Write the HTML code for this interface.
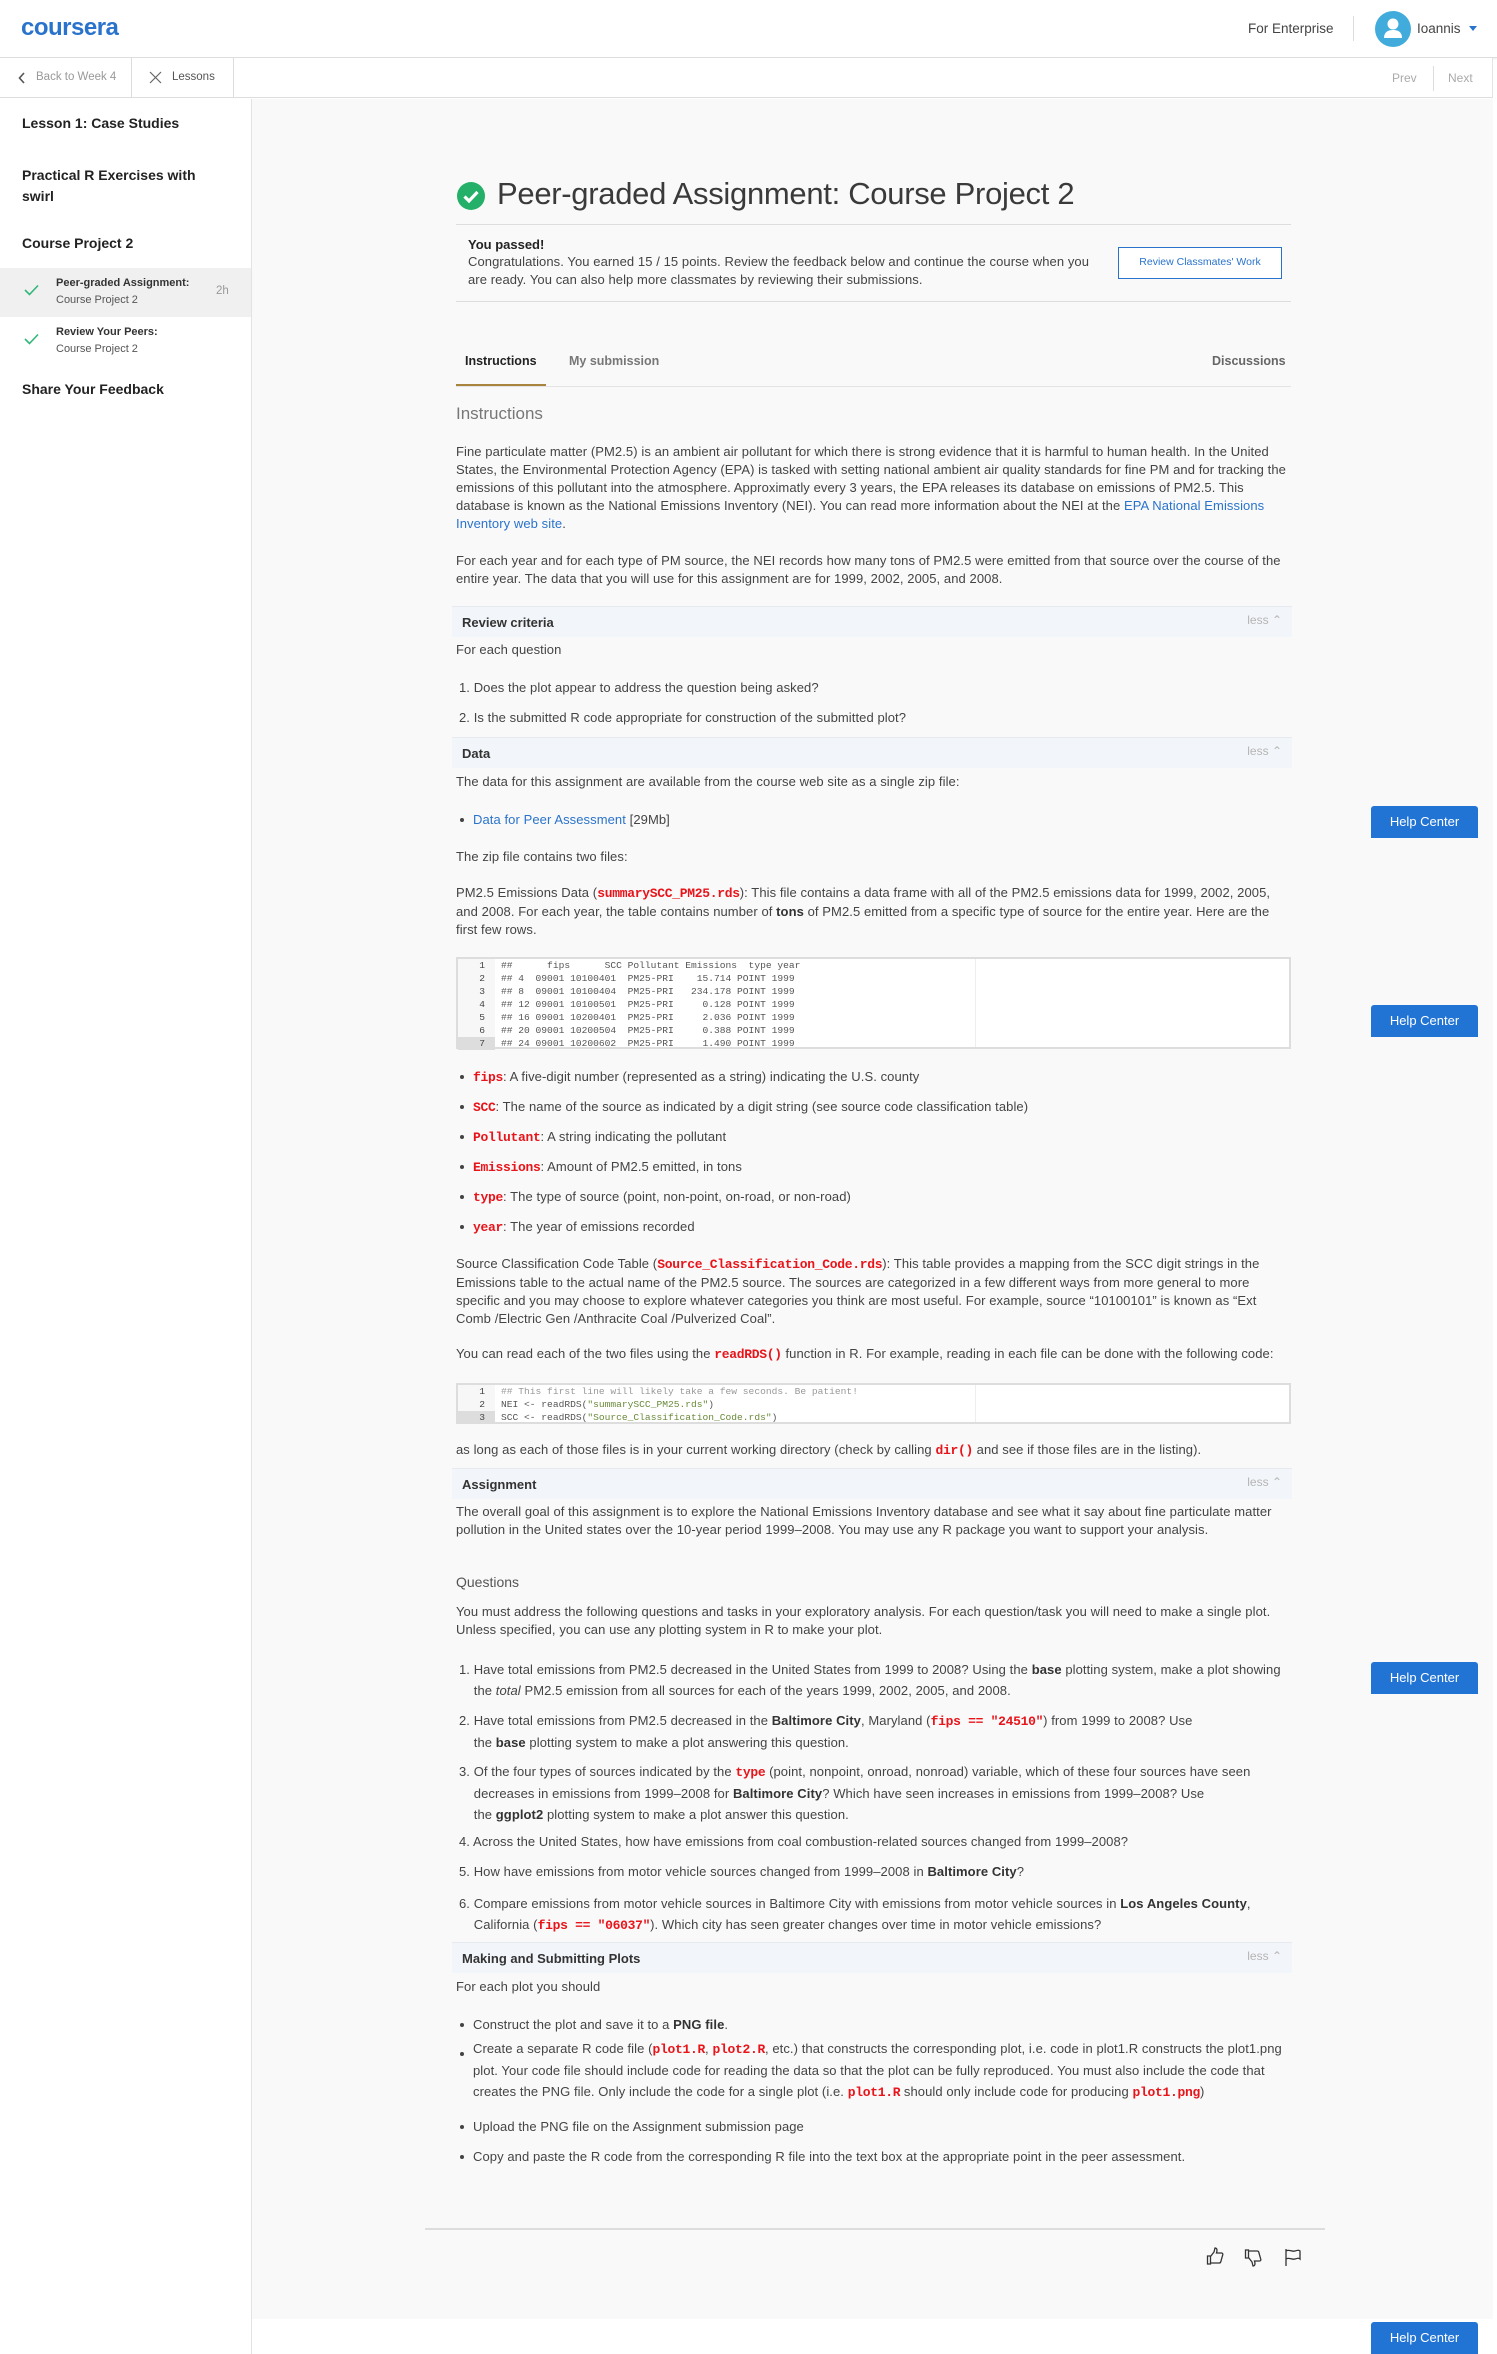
<!DOCTYPE html>
<html><head><meta charset="utf-8">
<style>
*{margin:0;padding:0;box-sizing:border-box}
body{width:1497px;height:2354px;position:relative;background:#fff;font-family:"Liberation Sans",sans-serif;color:#444;overflow:hidden}
.a{position:absolute;white-space:nowrap}
.t{position:absolute;white-space:nowrap;font-size:13px;letter-spacing:0.08px;line-height:18px;color:#444;left:456px}
.r{font-family:"Liberation Mono",monospace;font-weight:bold;color:#e8141a;font-size:13px;letter-spacing:-0.3px}
b{color:#333}
a{color:#2a73cc;text-decoration:none}
.sh{position:absolute;left:452px;width:840px;height:31px;background:#f2f5f9;border-top:1px solid #e6eaef}
.sh span{position:absolute;left:10px;top:8px;font-size:13px;font-weight:bold;color:#333}
.sh i{position:absolute;right:10px;top:6px;font-style:normal;font-size:12px;color:#b5b5b5}
.code{position:absolute;left:456px;width:835px;border:2px solid #ddd;background:#fff;font-family:"Liberation Mono",monospace;font-size:9.6px;line-height:13px;color:#555}
.code .g{position:absolute;left:0;top:0;bottom:0;width:37px;background:#f7f7f7;text-align:right;padding-right:10px;color:#444}
.code .c{position:absolute;left:43px;top:0;white-space:pre}
.bul{position:absolute;left:460px;width:4px;height:4px;border-radius:50%;background:#444}
.hc{position:absolute;left:1371px;width:107px;height:32px;background:#2174d4;color:#fff;font-size:13px;text-align:center;line-height:32px;border-radius:3px 3px 0 0}
</style></head><body>

<!-- header -->
<div class="a" style="left:0;top:0;width:1497px;height:58px;background:#fff;border-bottom:1px solid #ddd;box-shadow:0 1px 2px rgba(0,0,0,.08)"></div>
<div class="a" style="left:21px;top:14px;font-size:24px;font-weight:bold;color:#2a73cc;letter-spacing:-0.5px">coursera</div>
<div class="a" style="left:1248px;top:21px;font-size:13.5px;color:#444">For Enterprise</div>
<div class="a" style="left:1353px;top:16px;width:1px;height:25px;background:#ddd"></div>
<svg class="a" style="left:1375px;top:11px" width="36" height="36" viewBox="0 0 36 36"><circle cx="18" cy="18" r="18" fill="#41acdc"/><circle cx="18" cy="13" r="5.5" fill="#fff"/><path d="M9 27c0-6 4-8 9-8s9 2 9 8z" fill="#fff"/></svg>
<div class="a" style="left:1417px;top:21px;font-size:13.5px;color:#444">Ioannis</div>
<div class="a" style="left:1469px;top:26px;width:0;height:0;border-left:4px solid transparent;border-right:4px solid transparent;border-top:5px solid #2a73cc"></div>

<!-- nav bar -->
<div class="a" style="left:0;top:58px;width:1493px;height:40px;background:#fff;border-bottom:1px solid #ddd;border-right:1px solid #e5e5e5"></div>
<svg class="a" style="left:18px;top:72px" width="8" height="12"><path d="M6 1L1.5 6 6 11" stroke="#555" stroke-width="1.6" fill="none"/></svg>
<div class="a" style="left:36px;top:71px;font-size:11.5px;color:#999">Back to Week 4</div>
<div class="a" style="left:131px;top:58px;width:1px;height:40px;background:#ddd"></div>
<svg class="a" style="left:149px;top:71px" width="13" height="13"><path d="M1 1L12 12M12 1L1 12" stroke="#666" stroke-width="1.2"/></svg>
<div class="a" style="left:172px;top:71px;font-size:11.5px;color:#555">Lessons</div>
<div class="a" style="left:233px;top:58px;width:1px;height:40px;background:#ddd"></div>
<div class="a" style="left:1392px;top:71px;font-size:12px;color:#aaa">Prev</div>
<div class="a" style="left:1433px;top:66px;width:1px;height:25px;background:#ddd"></div>
<div class="a" style="left:1448px;top:71px;font-size:12px;color:#aaa">Next</div>

<!-- sidebar -->
<div class="a" style="left:0;top:99px;width:252px;height:2255px;background:#fff;border-right:1px solid #e3e3e3"></div>
<div class="a" style="left:22px;top:115px;font-size:14px;font-weight:bold;color:#222">Lesson 1: Case Studies</div>
<div class="a" style="left:22px;top:165px;font-size:14px;font-weight:bold;color:#222;line-height:21px">Practical R Exercises with<br>swirl</div>
<div class="a" style="left:22px;top:235px;font-size:14px;font-weight:bold;color:#222">Course Project 2</div>
<div class="a" style="left:0;top:268px;width:251px;height:49px;background:#f0f0f0"></div>
<svg class="a" style="left:24px;top:284px" width="15" height="12"><path d="M1 6l4.5 4.5L14 1.5" stroke="#2fb879" stroke-width="1.6" fill="none"/></svg>
<div class="a" style="left:56px;top:277px;font-size:11px;font-weight:bold;color:#333">Peer-graded Assignment:</div>
<div class="a" style="left:56px;top:294px;font-size:11px;color:#555">Course Project 2</div>
<div class="a" style="left:216px;top:285px;font-size:11.5px;color:#999">2h</div>
<svg class="a" style="left:24px;top:333px" width="15" height="12"><path d="M1 6l4.5 4.5L14 1.5" stroke="#2fb879" stroke-width="1.6" fill="none"/></svg>
<div class="a" style="left:56px;top:326px;font-size:11px;font-weight:bold;color:#333">Review Your Peers:</div>
<div class="a" style="left:56px;top:343px;font-size:11px;color:#555">Course Project 2</div>
<div class="a" style="left:22px;top:381px;font-size:14px;font-weight:bold;color:#222">Share Your Feedback</div>

<!-- main bg -->
<div class="a" style="left:252px;top:99px;width:1241px;height:2220px;background:#f9f9f9"></div>

<!-- title -->
<svg class="a" style="left:457px;top:182px" width="28" height="28" viewBox="0 0 28 28"><circle cx="14" cy="14" r="14" fill="#24b068"/><path d="M7.5 14.5l4.5 4.5 8.5-9" stroke="#fff" stroke-width="3.2" fill="none"/></svg>
<div class="a" style="left:497px;top:176px;font-size:31px;color:#3a3a3a;letter-spacing:-0.3px">Peer-graded Assignment: Course Project 2</div>
<div class="a" style="left:456px;top:224px;width:835px;height:1px;background:#ddd"></div>
<div class="a" style="left:468px;top:237px;font-size:13px;font-weight:bold;color:#222">You passed!</div>
<div class="t" style="left:468px;top:253px">Congratulations. You earned 15 / 15 points. Review the feedback below and continue the course when you<br>are ready. You can also help more classmates by reviewing their submissions.</div>
<div class="a" style="left:1118px;top:247px;width:164px;height:32px;border:1.5px solid #2a73cc;background:#fff;color:#2a73cc;font-size:10.5px;text-align:center;line-height:29px">Review Classmates' Work</div>
<div class="a" style="left:456px;top:301px;width:835px;height:1px;background:#ddd"></div>

<!-- tabs -->
<div class="a" style="left:465px;top:354px;font-size:12.5px;font-weight:bold;color:#222">Instructions</div>
<div class="a" style="left:569px;top:354px;font-size:12.5px;font-weight:bold;color:#777">My submission</div>
<div class="a" style="left:1212px;top:354px;font-size:12.5px;font-weight:bold;color:#666">Discussions</div>
<div class="a" style="left:456px;top:386px;width:835px;height:1px;background:#e3e3e3"></div>
<div class="a" style="left:456px;top:384px;width:90px;height:2px;background:#a8843f"></div>

<div class="a" style="left:456px;top:404px;font-size:17px;color:#777">Instructions</div>
<div class="t" style="top:443px">Fine particulate matter (PM2.5) is an ambient air pollutant for which there is strong evidence that it is harmful to human health. In the United<br>States, the Environmental Protection Agency (EPA) is tasked with setting national ambient air quality standards for fine PM and for tracking the<br>emissions of this pollutant into the atmosphere. Approximatly every 3 years, the EPA releases its database on emissions of PM2.5. This<br>database is known as the National Emissions Inventory (NEI). You can read more information about the NEI at the <a>EPA National Emissions</a><br><a>Inventory web site</a>.</div>
<div class="t" style="top:552px">For each year and for each type of PM source, the NEI records how many tons of PM2.5 were emitted from that source over the course of the<br>entire year. The data that you will use for this assignment are for 1999, 2002, 2005, and 2008.</div>

<!-- review criteria -->
<div class="sh" style="top:606px"><span>Review criteria</span><i>less ⌃</i></div>
<div class="t" style="top:641px">For each question</div>
<div class="t" style="top:679px;left:459px">1. Does the plot appear to address the question being asked?</div>
<div class="t" style="top:709px;left:459px">2. Is the submitted R code appropriate for construction of the submitted plot?</div>

<!-- data -->
<div class="sh" style="top:737px"><span>Data</span><i>less ⌃</i></div>
<div class="t" style="top:773px">The data for this assignment are available from the course web site as a single zip file:</div>
<div class="bul" style="top:818px"></div>
<div class="t" style="top:811px;left:473px"><a>Data for Peer Assessment</a> [29Mb]</div>
<div class="t" style="top:848px">The zip file contains two files:</div>
<div class="t" style="top:884px">PM2.5 Emissions Data (<span class="r">summarySCC_PM25.rds</span>): This file contains a data frame with all of the PM2.5 emissions data for 1999, 2002, 2005,<br>and 2008. For each year, the table contains number of <b>tons</b> of PM2.5 emitted from a specific type of source for the entire year. Here are the<br>first few rows.</div>

<div class="code" style="top:957px;height:92px"><div class="g">1<br>2<br>3<br>4<br>5<br>6<br><span style="display:block;background:#ddd;margin-right:-10px;padding-right:10px">7</span></div><div style="position:absolute;left:517px;top:0;bottom:0;width:1px;background:#eee"></div><div class="c">##      fips      SCC Pollutant Emissions  type year
## 4  09001 10100401  PM25-PRI    15.714 POINT 1999
## 8  09001 10100404  PM25-PRI   234.178 POINT 1999
## 12 09001 10100501  PM25-PRI     0.128 POINT 1999
## 16 09001 10200401  PM25-PRI     2.036 POINT 1999
## 20 09001 10200504  PM25-PRI     0.388 POINT 1999
## 24 09001 10200602  PM25-PRI     1.490 POINT 1999</div></div>

<div class="bul" style="top:1075px"></div><div class="t" style="top:1068px;left:473px"><span class="r">fips</span>: A five-digit number (represented as a string) indicating the U.S. county</div>
<div class="bul" style="top:1105px"></div><div class="t" style="top:1098px;left:473px"><span class="r">SCC</span>: The name of the source as indicated by a digit string (see source code classification table)</div>
<div class="bul" style="top:1135px"></div><div class="t" style="top:1128px;left:473px"><span class="r">Pollutant</span>: A string indicating the pollutant</div>
<div class="bul" style="top:1165px"></div><div class="t" style="top:1158px;left:473px"><span class="r">Emissions</span>: Amount of PM2.5 emitted, in tons</div>
<div class="bul" style="top:1195px"></div><div class="t" style="top:1188px;left:473px"><span class="r">type</span>: The type of source (point, non-point, on-road, or non-road)</div>
<div class="bul" style="top:1225px"></div><div class="t" style="top:1218px;left:473px"><span class="r">year</span>: The year of emissions recorded</div>

<div class="t" style="top:1255px">Source Classification Code Table (<span class="r">Source_Classification_Code.rds</span>): This table provides a mapping from the SCC digit strings in the<br>Emissions table to the actual name of the PM2.5 source. The sources are categorized in a few different ways from more general to more<br>specific and you may choose to explore whatever categories you think are most useful. For example, source “10100101” is known as “Ext<br>Comb /Electric Gen /Anthracite Coal /Pulverized Coal”.</div>
<div class="t" style="top:1345px">You can read each of the two files using the <span class="r">readRDS()</span> function in R. For example, reading in each file can be done with the following code:</div>

<div class="code" style="top:1383px;height:41px"><div class="g">1<br>2<br><span style="display:block;background:#ddd;margin-right:-10px;padding-right:10px">3</span></div><div style="position:absolute;left:517px;top:0;bottom:0;width:1px;background:#eee"></div><div class="c"><span style="color:#999">## This first line will likely take a few seconds. Be patient!</span>
NEI &lt;- readRDS(<span style="color:#6a8a3a">"summarySCC_PM25.rds"</span>)
SCC &lt;- readRDS(<span style="color:#6a8a3a">"Source_Classification_Code.rds"</span>)</div></div>

<div class="t" style="top:1441px">as long as each of those files is in your current working directory (check by calling <span class="r">dir()</span> and see if those files are in the listing).</div>

<!-- assignment -->
<div class="sh" style="top:1468px"><span>Assignment</span><i>less ⌃</i></div>
<div class="t" style="top:1503px">The overall goal of this assignment is to explore the National Emissions Inventory database and see what it say about fine particulate matter<br>pollution in the United states over the 10-year period 1999–2008. You may use any R package you want to support your analysis.</div>

<div class="a" style="left:456px;top:1574px;font-size:14px;color:#555">Questions</div>
<div class="t" style="top:1603px">You must address the following questions and tasks in your exploratory analysis. For each question/task you will need to make a single plot.<br>Unless specified, you can use any plotting system in R to make your plot.</div>
<div class="t" style="top:1659px;left:459px;line-height:21px">1. Have total emissions from PM2.5 decreased in the United States from 1999 to 2008? Using the <b>base</b> plotting system, make a plot showing<br>&nbsp;&nbsp;&nbsp; the <i>total</i> PM2.5 emission from all sources for each of the years 1999, 2002, 2005, and 2008.</div>
<div class="t" style="top:1710px;left:459px;line-height:21px">2. Have total emissions from PM2.5 decreased in the <b>Baltimore City</b>, Maryland (<span class="r">fips == "24510"</span>) from 1999 to 2008? Use<br>&nbsp;&nbsp;&nbsp; the <b>base</b> plotting system to make a plot answering this question.</div>
<div class="t" style="top:1761px;left:459px;line-height:21px">3. Of the four types of sources indicated by the <span class="r">type</span> (point, nonpoint, onroad, nonroad) variable, which of these four sources have seen<br>&nbsp;&nbsp;&nbsp; decreases in emissions from 1999–2008 for <b>Baltimore City</b>? Which have seen increases in emissions from 1999–2008? Use<br>&nbsp;&nbsp;&nbsp; the <b>ggplot2</b> plotting system to make a plot answer this question.</div>
<div class="t" style="top:1833px;left:459px">4. Across the United States, how have emissions from coal combustion-related sources changed from 1999–2008?</div>
<div class="t" style="top:1863px;left:459px">5. How have emissions from motor vehicle sources changed from 1999–2008 in <b>Baltimore City</b>?</div>
<div class="t" style="top:1893px;left:459px;line-height:21px">6. Compare emissions from motor vehicle sources in Baltimore City with emissions from motor vehicle sources in <b>Los Angeles County</b>,<br>&nbsp;&nbsp;&nbsp; California (<span class="r">fips == "06037"</span>). Which city has seen greater changes over time in motor vehicle emissions?</div>

<!-- making -->
<div class="sh" style="top:1942px"><span>Making and Submitting Plots</span><i>less ⌃</i></div>
<div class="t" style="top:1978px">For each plot you should</div>
<div class="bul" style="top:2023px"></div><div class="t" style="top:2016px;left:473px">Construct the plot and save it to a <b>PNG file</b>.</div>
<div class="bul" style="top:2052px"></div><div class="t" style="top:2038px;left:473px;line-height:21px">Create a separate R code file (<span class="r">plot1.R</span>, <span class="r">plot2.R</span>, etc.) that constructs the corresponding plot, i.e. code in plot1.R constructs the plot1.png<br>plot. Your code file should include code for reading the data so that the plot can be fully reproduced. You must also include the code that<br>creates the PNG file. Only include the code for a single plot (i.e. <span class="r">plot1.R</span> should only include code for producing <span class="r">plot1.png</span>)</div>
<div class="bul" style="top:2125px"></div><div class="t" style="top:2118px;left:473px">Upload the PNG file on the Assignment submission page</div>
<div class="bul" style="top:2155px"></div><div class="t" style="top:2148px;left:473px">Copy and paste the R code from the corresponding R file into the text box at the appropriate point in the peer assessment.</div>

<div class="a" style="left:425px;top:2228px;width:900px;height:2px;background:#ddd"></div>
<svg class="a" style="left:1206px;top:2247px" width="18" height="19" viewBox="0 0 18 19"><path d="M1.5 9h3v8h-3zM4.5 9.5l3.5-4.5 1-4c2 0 2.5 2 1.5 5h5c1.2 0 1.6 1 1.2 2l-2 7c-.3.8-.8 1-1.5 1H4.5" stroke="#333" stroke-width="1.3" fill="none"/></svg>
<svg class="a" style="left:1244px;top:2248px" width="18" height="19" viewBox="0 0 18 19"><path d="M1.5 2h3v8h-3zM4.5 9.5l3.5 4.5 1 4c2 0 2.5-2 1.5-5h5c1.2 0 1.6-1 1.2-2l-2-7c-.3-.8-.8-1-1.5-1H4.5" stroke="#333" stroke-width="1.3" fill="none"/></svg>
<svg class="a" style="left:1284px;top:2248px" width="18" height="19" viewBox="0 0 18 19"><path d="M2 1v17M2 3c3-2 6 1 9 0s4-1 5 0v8c-1-1-2-1-5 0s-6-2-9 0" stroke="#333" stroke-width="1.3" fill="none"/></svg>

<!-- help center buttons -->
<div class="hc" style="top:806px">Help Center</div>
<div class="hc" style="top:1005px">Help Center</div>
<div class="hc" style="top:1662px">Help Center</div>
<div class="hc" style="top:2322px">Help Center</div>
</body></html>
